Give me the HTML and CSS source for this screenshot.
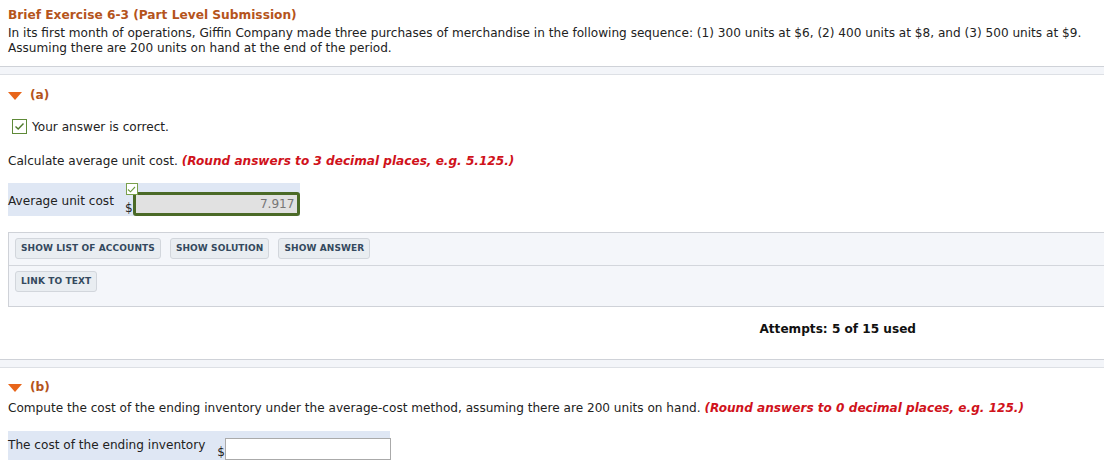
FILE: index.html
```html
<!DOCTYPE html>
<html>
<head>
<meta charset="utf-8">
<link rel="stylesheet" href="styles.css">
</head>
<body>
<div class="page">
  <div class="header">
    <h1 class="title">Brief Exercise 6-3 (Part Level Submission)</h1>
    <p class="intro">In its first month of operations, Giffin Company made three purchases of merchandise in the following sequence: (1) 300 units at $6, (2) 400 units at $8, and (3) 500 units at $9. Assuming there are 200 units on hand at the end of the period.</p>
  </div>
  <div class="band"></div>

  <section class="part part-a">
    <div class="part-head"><span class="tri"></span><span class="part-label">(a)</span></div>
    <div class="correct"><span class="cbox"><svg width="11" height="9" viewBox="0 0 11 9"><path d="M1.5 4.5 L4.2 7 L9.5 1.5" fill="none" stroke="#4f7a2c" stroke-width="1.4"/></svg></span><span>Your answer is correct.</span></div>
    <p class="q">Calculate average unit cost. <em class="hint">(Round answers to 3 decimal places, e.g. 5.125.)</em></p>
    <div class="row row-a">
      <span class="row-label">Average unit cost</span>
      <span class="field">
        <span class="mini-check"><svg width="9" height="7" viewBox="0 0 9 7"><path d="M1 3.5 L3.5 5.8 L8 1" fill="none" stroke="#6a9a3c" stroke-width="1.1"/></svg></span>
        <span class="dollar">$</span>
        <span class="input done">7.917</span>
      </span>
    </div>
    <div class="tools">
      <div class="tools-row">
        <span class="btn">SHOW LIST OF ACCOUNTS</span>
        <span class="btn">SHOW SOLUTION</span>
        <span class="btn">SHOW ANSWER</span>
      </div>
      <div class="tools-row second">
        <span class="btn">LINK TO TEXT</span>
      </div>
    </div>
    <div class="attempts"><span>Attempts: 5 of 15 used</span></div>
  </section>
  <div class="band"></div>

  <section class="part part-b">
    <div class="part-head"><span class="tri"></span><span class="part-label">(b)</span></div>
    <p class="q q-b">Compute the cost of the ending inventory under the average-cost method, assuming there are 200 units on hand. <em class="hint">(Round answers to 0 decimal places, e.g. 125.)</em></p>
    <div class="row row-b">
      <span class="row-label">The cost of the ending inventory</span>
      <span class="field field-b">
        <span class="dollar">$</span>
        <span class="input empty"></span>
      </span>
    </div>
  </section>
</div>
</body>
</html>
```

FILE: styles.css
```css
* { box-sizing: border-box; }
html, body { margin: 0; padding: 0; background: #fff; }
body {
  font-family: "DejaVu Sans", Verdana, sans-serif;
  font-size: 12.1px;
  color: #222;
  overflow: hidden;
}
.page { width: 1104px; }
.header { padding: 7px 8px 0 8px; }
.title {
  margin: 0;
  font-size: 12.2px;
  font-weight: bold;
  color: #b5541c;
  line-height: 16px;
}
.intro { margin: 3px 0 0 0; line-height: 15px; }
.band {
  height: 9px;
  background: #f3f5f9;
  border-top: 1px solid #cfd2d8;
  border-bottom: 1px solid #dde0e5;
}
.header + .band { margin-top: 10px; }
.part { padding: 0 8px; }
.part-head {
  display: flex;
  align-items: center;
  gap: 8px;
  height: 16px;
}
.part-a .part-head { margin-top: 12px; }
.tri {
  width: 0; height: 0;
  border-left: 7px solid transparent;
  border-right: 7px solid transparent;
  border-top: 8px solid #e8651a;
  margin-top: 2px;
}
.part-label { font-weight: bold; color: #b5541c; font-size: 12.2px; }
.correct {
  display: flex;
  align-items: center;
  gap: 5px;
  margin: 16px 0 0 4px;
}
.cbox {
  width: 15px; height: 15px;
  border: 1px solid #5f8a38;
  background: #fff;
  display: flex; align-items: center; justify-content: center;
}
.q { margin: 19px 0 0 0; line-height: 16px; }
.hint { color: #d0121b; font-weight: bold; font-style: italic; }
.row {
  display: flex;
  background: #dfe7f4;
}
.row-label { white-space: nowrap; flex-shrink: 0; line-height: 16px; }
.row-a { margin-top: 14px; width: 292px; height: 33px; }
.row-a .row-label { padding-top: 10px; }
.field { position: relative; display: flex; align-items: flex-end; flex-shrink: 0; }
.row-a .field { margin-left: 11px; padding-top: 8px; }
.mini-check {
  position: absolute; left: 1px; top: 0;
  width: 12px; height: 12px;
  border: 1px solid #7aa04c;
  background: #fff;
  display: flex; align-items: center; justify-content: center;
}
.dollar { font-size: 12px; line-height: 13px; margin-bottom: 1px; }
.input {
  display: block;
  text-align: right;
  color: #777;
}
.input.done {
  width: 167px; height: 24px;
  background: #e1e1e1;
  border: 3px solid #4b6a27;
  border-radius: 3px;
  padding: 1px 2px 0 0;
  line-height: 16px;
}
.tools {
  margin-top: 16px;
  margin-right: -8px;
  background: #f4f6fa;
  border: 1px solid #cfd2d8;
  border-right: none;
}
.tools-row { display: flex; gap: 9px; padding: 5px 6px 6px 6px; }
.tools-row.second { border-top: 1px solid #d3d6dc; padding: 5px 6px 14px 6px; }
.btn {
  display: inline-block;
  font-size: 9px;
  font-weight: bold;
  color: #34495e;
  background: #e9edf1;
  border: 1px solid #d2d6dc;
  border-radius: 3px;
  padding: 3px 5px 3px 5px;
  line-height: 13px;
  letter-spacing: 0.1px;
}
.attempts {
  display: flex;
  justify-content: flex-end;
  padding: 15px 180px 23px 0;
}
.attempts span { font-weight: bold; color: #111; }
.part-b .part-head { margin-top: 11px; }
.q-b { margin-top: 5px; }
.row-b { margin-top: 15px; width: 382px; height: 29px; }
.row-b .row-label { padding-top: 6px; }
.field-b { margin-left: 12px; padding-top: 7px; }
.input.empty {
  width: 166px; height: 22px;
  background: #fff;
  border: 1px solid #aaa;
}
```
